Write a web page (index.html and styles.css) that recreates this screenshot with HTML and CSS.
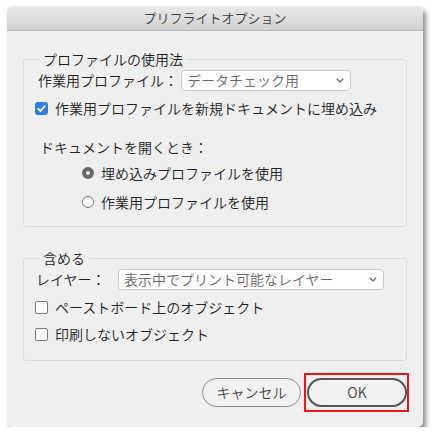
FILE: index.html
```html
<!DOCTYPE html>
<html lang="ja">
<head>
<meta charset="utf-8">
<title>プリフライトオプション</title>
<link rel="stylesheet" href="styles.css">
</head>
<body>
<div class="dialog">
  <div class="titlebar">プリフライトオプション</div>
  <div class="content">
    <fieldset class="group group-profile">
      <legend>プロファイルの使用法</legend>
      <div class="row row-select">
        <span class="label label-profile">作業用プロファイル：</span>
        <div class="select select-profile">
          <span>データチェック用</span>
          <svg class="chev" width="8" height="5" viewBox="0 0 8 5"><path d="M0.8 0.8 L4 4 L7.2 0.8" fill="none" stroke="#6f6f6f" stroke-width="1.3"/></svg>
        </div>
      </div>
      <div class="row row-check">
        <span class="cb checked"><svg width="13" height="13" viewBox="0 0 13 13"><path d="M3.2 6.8 L5.5 9 L9.8 4.2" fill="none" stroke="#fff" stroke-width="1.8" stroke-linecap="round" stroke-linejoin="round"/></svg></span>
        <span class="cb-text">作業用プロファイルを新規ドキュメントに埋め込み</span>
      </div>
      <div class="row row-open">ドキュメントを開くとき：</div>
      <div class="row row-radio first">
        <span class="radio selected"></span>
        <span class="radio-text">埋め込みプロファイルを使用</span>
      </div>
      <div class="row row-radio second">
        <span class="radio"></span>
        <span class="radio-text">作業用プロファイルを使用</span>
      </div>
    </fieldset>
    <fieldset class="group group-include">
      <legend>含める</legend>
      <div class="row row-select">
        <span class="label label-layer">レイヤー：</span>
        <div class="select select-layer">
          <span>表示中でプリント可能なレイヤー</span>
          <svg class="chev" width="8" height="5" viewBox="0 0 8 5"><path d="M0.8 0.8 L4 4 L7.2 0.8" fill="none" stroke="#6f6f6f" stroke-width="1.3"/></svg>
        </div>
      </div>
      <div class="row row-check c1">
        <span class="cb"></span>
        <span class="cb-text">ペーストボード上のオブジェクト</span>
      </div>
      <div class="row row-check c2">
        <span class="cb"></span>
        <span class="cb-text">印刷しないオブジェクト</span>
      </div>
    </fieldset>
    <div class="buttons">
      <button class="btn cancel">キャンセル</button>
      <div class="highlight">
        <button class="btn ok">OK</button>
      </div>
    </div>
  </div>
</div>
</body>
</html>
```
FILE: styles.css
```css
* { box-sizing: border-box; }
html, body { margin: 0; padding: 0; background: #ffffff; }
body {
  font-family: "Noto Sans CJK JP", "Noto Sans", sans-serif;
  font-weight: 350;
  color: #222;
  padding: 6px 0 0 7px;
}
.dialog {
  width: 416px;
  height: 421px;
  background: #efefef;
  border-radius: 5px;
  box-shadow: 3px 4px 5px rgba(0,0,0,0.45);
  overflow: hidden;
  display: flex;
  flex-direction: column;
}
.titlebar {
  height: 25px;
  flex: none;
  background: linear-gradient(#e9e9e9, #d2d2d2);
  border-bottom: 1px solid #b9b9b9;
  text-align: center;
  font-size: 13px;
  line-height: 24px;
  color: #3c3c3c;
}
.content {
  padding: 19px 16px 15px 16px;
  display: flex;
  flex-direction: column;
}
.group {
  margin: 0;
  border: 1px solid #dcdcdc;
  border-radius: 3px;
  padding: 0 0 0 15px;
  min-width: 0;
  flex: none;
}
.group legend {
  padding: 0 4px;
  font-size: 14px;
  line-height: 18px;
  color: #1e1e1e;
}
.row {
  display: flex;
  align-items: center;
  font-size: 14px;
  line-height: 20px;
  height: 20px;
}
.row-select { height: 22px; }
.group-profile .row-select { margin-top: 1px; margin-left: -1px; }
.label-profile { width: 143px; }
.select {
  height: 21px;
  background: #fff;
  border: 1px solid #cbcbcb;
  border-radius: 4px;
  display: flex;
  align-items: center;
  justify-content: space-between;
  padding: 0 6px 0 5px;
  color: #666;
  font-size: 14px;
}
.select-profile { width: 170px; }
.chev { flex: none; }
.row-check { margin-top: 7px; margin-left: -4px; }
.cb {
  width: 13px;
  height: 13px;
  border: 1px solid #7a7a7a;
  border-radius: 2px;
  background: #fff;
  flex: none;
  margin-right: 7px;
}
.cb.checked {
  border: none;
  background: #2f7de6;
  border-radius: 3px;
  display: flex;
}
.row-open { margin-top: 19px; margin-left: 1px; }
.row-radio { margin-left: 43px; }
.row-radio.first { margin-top: 6px; }
.row-radio.second { margin-top: 9px; }
.group-profile { height: 177px; }
.radio {
  width: 12px;
  height: 12px;
  border-radius: 50%;
  border: 1px solid #777;
  background: #fff;
  flex: none;
  margin-right: 7px;
}
.radio.selected {
  border: 4px solid #6a6a6a;
  background: #e8e8e8;
}
.group-include {
  margin-top: 22px;
  height: 112px;
}
.group-include .row-select { margin-left: -3px; margin-top: 1px; }
.label-layer { width: 82px; }
.select-layer { width: 266px; }
.row-check.c1 { margin-top: 7px; }
.row-check.c2 { margin-top: 7px; }
.buttons {
  display: flex;
  justify-content: flex-end;
  align-items: center;
  margin-top: 12px;
  gap: 3px;
}
.btn {
  font-family: "Noto Sans CJK JP", "Noto Sans", sans-serif;
  font-weight: 350;
  font-size: 14px;
  color: #444;
  background: #f2f2f2;
  border: 1px solid #8a8a8a;
  border-radius: 15px;
  height: 29px;
  padding: 0;
  line-height: 27px;
}
.cancel { width: 99px; }
.highlight {
  border: 2px solid #e8161b;
  padding: 3px 0 3px 1px;
  margin-right: -2px;
}
.ok {
  width: 100px;
  border: 2px solid #555;
  line-height: 25px;
}
```
